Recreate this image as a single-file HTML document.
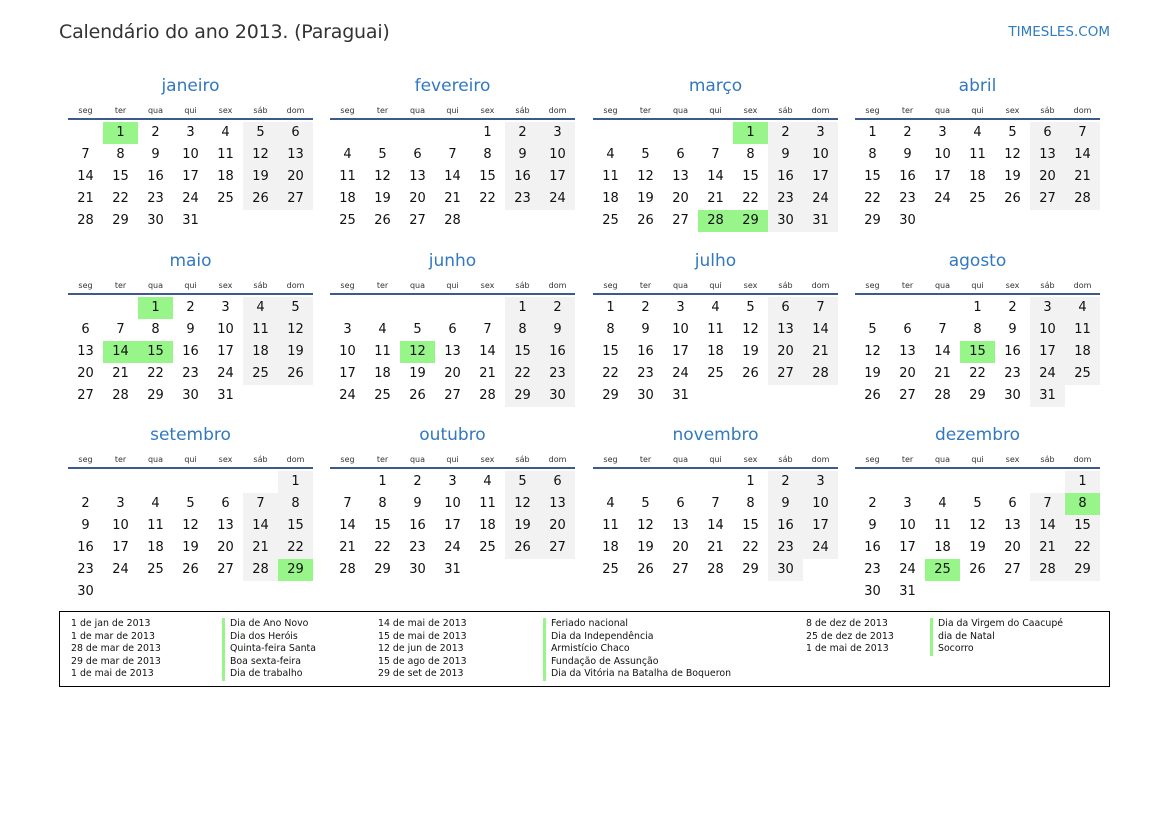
<!DOCTYPE html>
<html><head><meta charset="utf-8"><style>
body{margin:0;width:1169px;height:827px;background:#fff;font-family:"DejaVu Sans","Liberation Sans",sans-serif;color:#111;position:relative;overflow:hidden}
.t{position:absolute;left:59px;top:21px;font-size:19px;color:#333;letter-spacing:-0.2px}
.s{position:absolute;right:59px;top:24px;font-size:13.5px;color:#2f7bc0}
.m{position:absolute;width:245px}
.m .n{height:24px;line-height:26px;text-align:center;font-size:17px;color:#3278c0}
.m .hd{display:flex;height:21px;line-height:27px;font-size:8px;color:#333;border-bottom:2px solid #3c5a8c}
.m .hd span{width:35px;text-align:center}
table{border-collapse:collapse;margin-top:2px}
td{width:35px;height:22px;padding:0;text-align:center;font-size:13px;line-height:22px}
td.w{background:#f2f2f2}td.h{background:#98f58a}
.lg{position:absolute;left:59px;top:611px;width:1049px;height:74px;border:1px solid #000;font-size:9.4px;color:#111}
.lg div{position:absolute;line-height:12.5px;top:6px}
.lg .b{border-left:3px solid #98f58a;padding-left:5px}
</style></head><body>
<div class="t">Calendário do ano 2013. (Paraguai)</div>
<div class="s">TIMESLES.COM</div>

<div class="m" style="left:68px;top:73px"><div class="n">janeiro</div><div class="hd"><span>seg</span><span>ter</span><span>qua</span><span>qui</span><span>sex</span><span>sáb</span><span>dom</span></div><table>
<tr><td></td><td class="h">1</td><td>2</td><td>3</td><td>4</td><td class="w">5</td><td class="w">6</td></tr>
<tr><td>7</td><td>8</td><td>9</td><td>10</td><td>11</td><td class="w">12</td><td class="w">13</td></tr>
<tr><td>14</td><td>15</td><td>16</td><td>17</td><td>18</td><td class="w">19</td><td class="w">20</td></tr>
<tr><td>21</td><td>22</td><td>23</td><td>24</td><td>25</td><td class="w">26</td><td class="w">27</td></tr>
<tr><td>28</td><td>29</td><td>30</td><td>31</td><td></td><td></td><td></td></tr></table></div>

<div class="m" style="left:330px;top:73px"><div class="n">fevereiro</div><div class="hd"><span>seg</span><span>ter</span><span>qua</span><span>qui</span><span>sex</span><span>sáb</span><span>dom</span></div><table>
<tr><td></td><td></td><td></td><td></td><td>1</td><td class="w">2</td><td class="w">3</td></tr>
<tr><td>4</td><td>5</td><td>6</td><td>7</td><td>8</td><td class="w">9</td><td class="w">10</td></tr>
<tr><td>11</td><td>12</td><td>13</td><td>14</td><td>15</td><td class="w">16</td><td class="w">17</td></tr>
<tr><td>18</td><td>19</td><td>20</td><td>21</td><td>22</td><td class="w">23</td><td class="w">24</td></tr>
<tr><td>25</td><td>26</td><td>27</td><td>28</td><td></td><td></td><td></td></tr></table></div>

<div class="m" style="left:593px;top:73px"><div class="n">março</div><div class="hd"><span>seg</span><span>ter</span><span>qua</span><span>qui</span><span>sex</span><span>sáb</span><span>dom</span></div><table>
<tr><td></td><td></td><td></td><td></td><td class="h">1</td><td class="w">2</td><td class="w">3</td></tr>
<tr><td>4</td><td>5</td><td>6</td><td>7</td><td>8</td><td class="w">9</td><td class="w">10</td></tr>
<tr><td>11</td><td>12</td><td>13</td><td>14</td><td>15</td><td class="w">16</td><td class="w">17</td></tr>
<tr><td>18</td><td>19</td><td>20</td><td>21</td><td>22</td><td class="w">23</td><td class="w">24</td></tr>
<tr><td>25</td><td>26</td><td>27</td><td class="h">28</td><td class="h">29</td><td class="w">30</td><td class="w">31</td></tr></table></div>

<div class="m" style="left:855px;top:73px"><div class="n">abril</div><div class="hd"><span>seg</span><span>ter</span><span>qua</span><span>qui</span><span>sex</span><span>sáb</span><span>dom</span></div><table>
<tr><td>1</td><td>2</td><td>3</td><td>4</td><td>5</td><td class="w">6</td><td class="w">7</td></tr>
<tr><td>8</td><td>9</td><td>10</td><td>11</td><td>12</td><td class="w">13</td><td class="w">14</td></tr>
<tr><td>15</td><td>16</td><td>17</td><td>18</td><td>19</td><td class="w">20</td><td class="w">21</td></tr>
<tr><td>22</td><td>23</td><td>24</td><td>25</td><td>26</td><td class="w">27</td><td class="w">28</td></tr>
<tr><td>29</td><td>30</td><td></td><td></td><td></td><td></td><td></td></tr></table></div>

<div class="m" style="left:68px;top:248px"><div class="n">maio</div><div class="hd"><span>seg</span><span>ter</span><span>qua</span><span>qui</span><span>sex</span><span>sáb</span><span>dom</span></div><table>
<tr><td></td><td></td><td class="h">1</td><td>2</td><td>3</td><td class="w">4</td><td class="w">5</td></tr>
<tr><td>6</td><td>7</td><td>8</td><td>9</td><td>10</td><td class="w">11</td><td class="w">12</td></tr>
<tr><td>13</td><td class="h">14</td><td class="h">15</td><td>16</td><td>17</td><td class="w">18</td><td class="w">19</td></tr>
<tr><td>20</td><td>21</td><td>22</td><td>23</td><td>24</td><td class="w">25</td><td class="w">26</td></tr>
<tr><td>27</td><td>28</td><td>29</td><td>30</td><td>31</td><td></td><td></td></tr></table></div>

<div class="m" style="left:330px;top:248px"><div class="n">junho</div><div class="hd"><span>seg</span><span>ter</span><span>qua</span><span>qui</span><span>sex</span><span>sáb</span><span>dom</span></div><table>
<tr><td></td><td></td><td></td><td></td><td></td><td class="w">1</td><td class="w">2</td></tr>
<tr><td>3</td><td>4</td><td>5</td><td>6</td><td>7</td><td class="w">8</td><td class="w">9</td></tr>
<tr><td>10</td><td>11</td><td class="h">12</td><td>13</td><td>14</td><td class="w">15</td><td class="w">16</td></tr>
<tr><td>17</td><td>18</td><td>19</td><td>20</td><td>21</td><td class="w">22</td><td class="w">23</td></tr>
<tr><td>24</td><td>25</td><td>26</td><td>27</td><td>28</td><td class="w">29</td><td class="w">30</td></tr></table></div>

<div class="m" style="left:593px;top:248px"><div class="n">julho</div><div class="hd"><span>seg</span><span>ter</span><span>qua</span><span>qui</span><span>sex</span><span>sáb</span><span>dom</span></div><table>
<tr><td>1</td><td>2</td><td>3</td><td>4</td><td>5</td><td class="w">6</td><td class="w">7</td></tr>
<tr><td>8</td><td>9</td><td>10</td><td>11</td><td>12</td><td class="w">13</td><td class="w">14</td></tr>
<tr><td>15</td><td>16</td><td>17</td><td>18</td><td>19</td><td class="w">20</td><td class="w">21</td></tr>
<tr><td>22</td><td>23</td><td>24</td><td>25</td><td>26</td><td class="w">27</td><td class="w">28</td></tr>
<tr><td>29</td><td>30</td><td>31</td><td></td><td></td><td></td><td></td></tr></table></div>

<div class="m" style="left:855px;top:248px"><div class="n">agosto</div><div class="hd"><span>seg</span><span>ter</span><span>qua</span><span>qui</span><span>sex</span><span>sáb</span><span>dom</span></div><table>
<tr><td></td><td></td><td></td><td>1</td><td>2</td><td class="w">3</td><td class="w">4</td></tr>
<tr><td>5</td><td>6</td><td>7</td><td>8</td><td>9</td><td class="w">10</td><td class="w">11</td></tr>
<tr><td>12</td><td>13</td><td>14</td><td class="h">15</td><td>16</td><td class="w">17</td><td class="w">18</td></tr>
<tr><td>19</td><td>20</td><td>21</td><td>22</td><td>23</td><td class="w">24</td><td class="w">25</td></tr>
<tr><td>26</td><td>27</td><td>28</td><td>29</td><td>30</td><td class="w">31</td><td></td></tr></table></div>

<div class="m" style="left:68px;top:422px"><div class="n">setembro</div><div class="hd"><span>seg</span><span>ter</span><span>qua</span><span>qui</span><span>sex</span><span>sáb</span><span>dom</span></div><table>
<tr><td></td><td></td><td></td><td></td><td></td><td></td><td class="w">1</td></tr>
<tr><td>2</td><td>3</td><td>4</td><td>5</td><td>6</td><td class="w">7</td><td class="w">8</td></tr>
<tr><td>9</td><td>10</td><td>11</td><td>12</td><td>13</td><td class="w">14</td><td class="w">15</td></tr>
<tr><td>16</td><td>17</td><td>18</td><td>19</td><td>20</td><td class="w">21</td><td class="w">22</td></tr>
<tr><td>23</td><td>24</td><td>25</td><td>26</td><td>27</td><td class="w">28</td><td class="h">29</td></tr>
<tr><td>30</td><td></td><td></td><td></td><td></td><td></td><td></td></tr></table></div>

<div class="m" style="left:330px;top:422px"><div class="n">outubro</div><div class="hd"><span>seg</span><span>ter</span><span>qua</span><span>qui</span><span>sex</span><span>sáb</span><span>dom</span></div><table>
<tr><td></td><td>1</td><td>2</td><td>3</td><td>4</td><td class="w">5</td><td class="w">6</td></tr>
<tr><td>7</td><td>8</td><td>9</td><td>10</td><td>11</td><td class="w">12</td><td class="w">13</td></tr>
<tr><td>14</td><td>15</td><td>16</td><td>17</td><td>18</td><td class="w">19</td><td class="w">20</td></tr>
<tr><td>21</td><td>22</td><td>23</td><td>24</td><td>25</td><td class="w">26</td><td class="w">27</td></tr>
<tr><td>28</td><td>29</td><td>30</td><td>31</td><td></td><td></td><td></td></tr></table></div>

<div class="m" style="left:593px;top:422px"><div class="n">novembro</div><div class="hd"><span>seg</span><span>ter</span><span>qua</span><span>qui</span><span>sex</span><span>sáb</span><span>dom</span></div><table>
<tr><td></td><td></td><td></td><td></td><td>1</td><td class="w">2</td><td class="w">3</td></tr>
<tr><td>4</td><td>5</td><td>6</td><td>7</td><td>8</td><td class="w">9</td><td class="w">10</td></tr>
<tr><td>11</td><td>12</td><td>13</td><td>14</td><td>15</td><td class="w">16</td><td class="w">17</td></tr>
<tr><td>18</td><td>19</td><td>20</td><td>21</td><td>22</td><td class="w">23</td><td class="w">24</td></tr>
<tr><td>25</td><td>26</td><td>27</td><td>28</td><td>29</td><td class="w">30</td><td></td></tr></table></div>

<div class="m" style="left:855px;top:422px"><div class="n">dezembro</div><div class="hd"><span>seg</span><span>ter</span><span>qua</span><span>qui</span><span>sex</span><span>sáb</span><span>dom</span></div><table>
<tr><td></td><td></td><td></td><td></td><td></td><td></td><td class="w">1</td></tr>
<tr><td>2</td><td>3</td><td>4</td><td>5</td><td>6</td><td class="w">7</td><td class="h">8</td></tr>
<tr><td>9</td><td>10</td><td>11</td><td>12</td><td>13</td><td class="w">14</td><td class="w">15</td></tr>
<tr><td>16</td><td>17</td><td>18</td><td>19</td><td>20</td><td class="w">21</td><td class="w">22</td></tr>
<tr><td>23</td><td>24</td><td class="h">25</td><td>26</td><td>27</td><td class="w">28</td><td class="w">29</td></tr>
<tr><td>30</td><td>31</td><td></td><td></td><td></td><td></td><td></td></tr></table></div>

<div class="lg">
<div style="left:11px">1 de jan de 2013<br>1 de mar de 2013<br>28 de mar de 2013<br>29 de mar de 2013<br>1 de mai de 2013</div>
<div style="left:162px" class="b">Dia de Ano Novo<br>Dia dos Heróis<br>Quinta-feira Santa<br>Boa sexta-feira<br>Dia de trabalho</div>
<div style="left:318px">14 de mai de 2013<br>15 de mai de 2013<br>12 de jun de 2013<br>15 de ago de 2013<br>29 de set de 2013</div>
<div style="left:483px" class="b">Feriado nacional<br>Dia da Independência<br>Armistício Chaco<br>Fundação de Assunção<br>Dia da Vitória na Batalha de Boqueron</div>
<div style="left:746px">8 de dez de 2013<br>25 de dez de 2013<br>1 de mai de 2013</div>
<div style="left:870px" class="b">Dia da Virgem do Caacupé<br>dia de Natal<br>Socorro</div>
</div>
</body></html>
